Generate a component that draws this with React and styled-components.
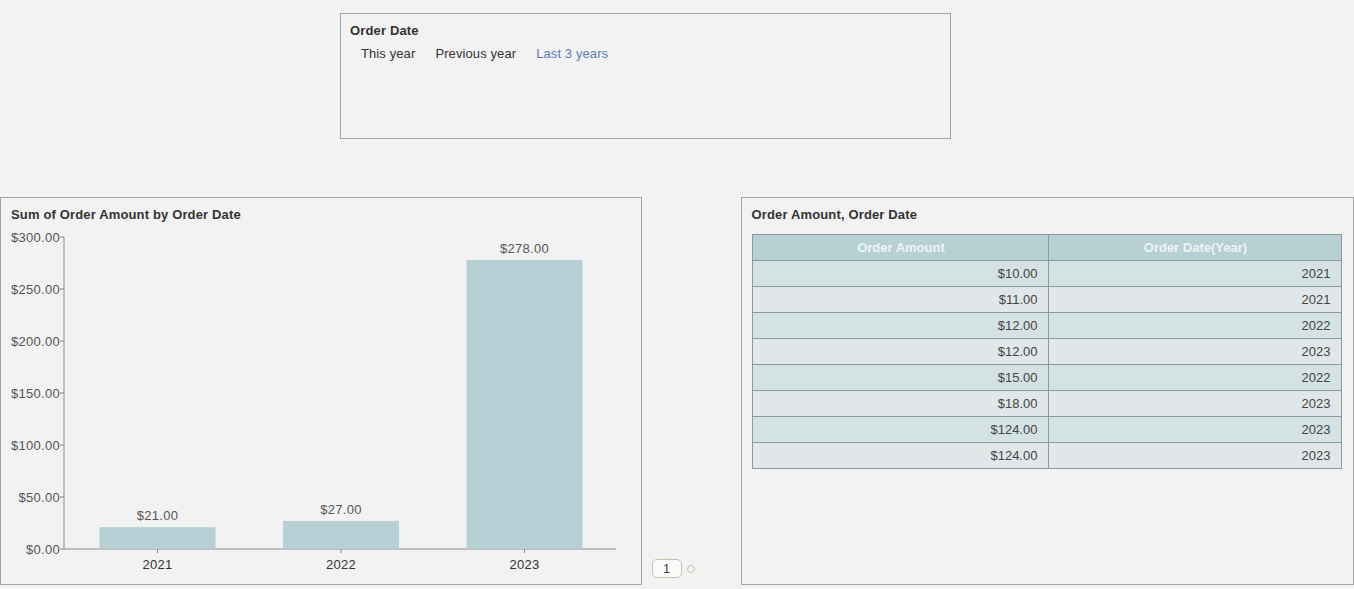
import styled, { createGlobalStyle } from 'styled-components';

const GlobalStyle = createGlobalStyle`
  html, body {
    margin: 0;
    padding: 0;
    background: #f2f2f2;
    font-family: "Liberation Sans", Arial, sans-serif;
  }
`;

const Page = styled.div`
  width: 1354px;
  height: 589px;
  display: flex;
  flex-direction: column;
  box-sizing: border-box;
  padding-top: 13px;
  overflow: hidden;
`;

const TopRow = styled.div`
  display: flex;
  padding-left: 340px;
  height: 126px;
`;

const Panel = styled.div`
  box-sizing: border-box;
  border: 1px solid #a3a3a3;
  background: #f2f2f2;
  width: ${(p) => p.$width}px;
  height: ${(p) => p.$height}px;
  padding: 9px 9px 0 9px;
  display: flex;
  flex-direction: column;
`;

const Title = styled.div`
  font-size: 13px;
  font-weight: bold;
  color: #333;
  line-height: 16px;
  letter-spacing: 0.15px;
  padding-left: ${(p) => (p.$indent ? 1 : 0)}px;
`;

const Options = styled.div`
  display: flex;
  gap: 20px;
  padding-left: 11px;
  margin-top: 7px;
`;

const Option = styled.span`
  font-size: 13px;
  letter-spacing: 0.1px;
  color: ${(p) => (p.$active ? '#5b7db3' : '#333')};
  line-height: 16px;
`;

const BottomRow = styled.div`
  display: flex;
  margin-top: 58px;
  height: 388px;
`;

const Middle = styled.div`
  width: 100px;
  display: flex;
  align-items: flex-end;
  padding: 0 0 7px 10px;
  box-sizing: border-box;
  gap: 5px;
`;

const PageBox = styled.div`
  width: 30px;
  height: 19px;
  box-sizing: border-box;
  border: 1px solid #c9c3a3;
  border-radius: 5px;
  background: #fafafa;
  font-size: 12px;
  color: #333;
  display: flex;
  align-items: center;
  justify-content: center;
`;

const PageDot = styled.div`
  width: 8px;
  height: 8px;
  box-sizing: border-box;
  border: 1px solid #c9c3a3;
  border-radius: 50%;
  margin-bottom: 5px;
`;

const Table = styled.table`
  border-collapse: collapse;
  margin: 11px 0 0 1px;
  width: 590px;
  font-size: 13px;
  table-layout: fixed;
`;

const HeadCell = styled.th`
  background: #b7d0d4;
  color: #eef4f4;
  font-weight: bold;
  height: 25px;
  padding: 0;
  border: 1px solid #8c9b9d;
  text-align: center;
  width: ${(p) => (p.$w ? `${p.$w}px` : 'auto')};
`;

const Cell = styled.td`
  background: ${(p) => (p.$odd ? '#d4e2e3' : '#e1e7e9')};
  color: #444;
  height: 25px;
  padding: 0 11px 0 0;
  border: 1px solid #8c9b9d;
  text-align: right;
`;

const rows = [
  ['$10.00', '2021'],
  ['$11.00', '2021'],
  ['$12.00', '2022'],
  ['$12.00', '2023'],
  ['$15.00', '2022'],
  ['$18.00', '2023'],
  ['$124.00', '2023'],
  ['$124.00', '2023'],
];

const bars = [
  { year: '2021', value: 21 },
  { year: '2022', value: 27 },
  { year: '2023', value: 278 },
];

function BarChart() {
  // plot area in svg coordinates
  const x0 = 63;
  const x1 = 615;
  const yBase = 326;
  const scale = 312 / 300;
  const band = 183.5;
  const firstCenter = 156.5;
  const ticks = [0, 50, 100, 150, 200, 250, 300];
  return (
    <svg width="620" height="362" style={{ display: 'block', marginLeft: '-9px' }}>
      <g fontFamily="Liberation Sans, Arial, sans-serif" fontSize="13" fill="#555" letterSpacing="0.3">
        <line x1={x0} y1={yBase - 312} x2={x0} y2={yBase} stroke="#8a8a8a" />
        <line x1={x0} y1={yBase} x2={x1} y2={yBase} stroke="#8a8a8a" />
        {ticks.map((t) => {
          const y = yBase - t * scale;
          return (
            <g key={t}>
              <line x1={x0 - 4} y1={y} x2={x0} y2={y} stroke="#8a8a8a" />
              <text x={x0 - 4} y={y + 5} textAnchor="end">
                ${t.toFixed(2)}
              </text>
            </g>
          );
        })}
        {bars.map((b, i) => {
          const cx = firstCenter + band * i;
          const h = b.value * scale;
          return (
            <g key={b.year}>
              <rect x={cx - 58} y={yBase - h} width="116" height={h} fill="#b7d0d5" />
              <text x={cx} y={yBase - h - 7} textAnchor="middle">
                ${b.value.toFixed(2)}
              </text>
              <line x1={cx} y1={yBase} x2={cx} y2={yBase + 4} stroke="#8a8a8a" />
              <text x={cx} y={yBase + 20} textAnchor="middle" fill="#333">
                {b.year}
              </text>
            </g>
          );
        })}
      </g>
    </svg>
  );
}

export default function App() {
  return (
    <Page>
      <GlobalStyle />
      <TopRow>
        <Panel $width={611} $height={126}>
          <Title>Order Date</Title>
          <Options>
            <Option>This year</Option>
            <Option>Previous year</Option>
            <Option $active>Last 3 years</Option>
          </Options>
        </Panel>
      </TopRow>
      <BottomRow>
        <Panel $width={642} $height={388}>
          <Title $indent>Sum of Order Amount by Order Date</Title>
          <BarChart />
        </Panel>
        <Middle>
          <PageBox>1</PageBox>
          <PageDot />
        </Middle>
        <Panel $width={613} $height={388}>
          <Title>Order Amount, Order Date</Title>
          <Table>
            <thead>
              <tr>
                <HeadCell $w={295}>Order Amount</HeadCell>
                <HeadCell>Order Date(Year)</HeadCell>
              </tr>
            </thead>
            <tbody>
              {rows.map((r, i) => (
                <tr key={i}>
                  <Cell $odd={i % 2 === 0}>{r[0]}</Cell>
                  <Cell $odd={i % 2 === 0}>{r[1]}</Cell>
                </tr>
              ))}
            </tbody>
          </Table>
        </Panel>
      </BottomRow>
    </Page>
  );
}
